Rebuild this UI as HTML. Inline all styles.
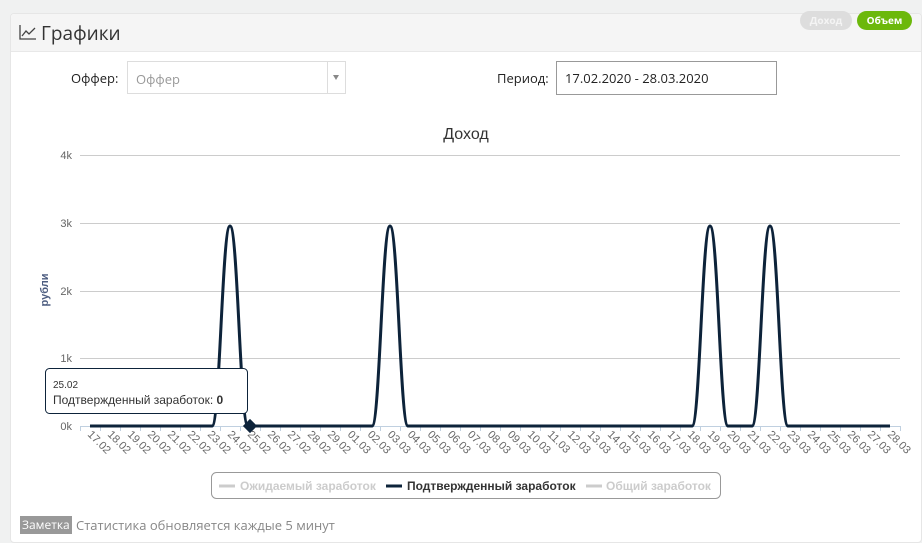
<!DOCTYPE html>
<html><head><meta charset="utf-8"><style>
body{margin:0;width:922px;height:537px;background:#f0f1f1;font-family:"Open Sans","Liberation Sans",sans-serif;overflow:hidden;position:relative}
.panel{position:absolute;left:10px;top:13px;width:912px;height:530px;background:#fff;border-radius:4px;border:1px solid #e6e6e6;box-sizing:border-box}
.head{position:absolute;left:0;top:0;right:0;height:37px;background:#f5f5f5;border-bottom:1px solid #e8e8e8;border-radius:4px 4px 0 0}
.t{position:absolute;font-size:13px;color:#222}
.btn{position:absolute;top:11px;height:19px;border-radius:10px;font-size:10px;font-weight:bold;color:#fff;text-align:center;line-height:19px}
</style></head><body>
<div class="panel"><div class="head"></div></div>
<svg style="position:absolute;left:19px;top:24px" width="18" height="16" viewBox="0 0 18 16"><path d="M1 1V15H17" stroke="#444" stroke-width="1.3" fill="none"/><path d="M3 12L7 7L10 10L16 4" stroke="#444" stroke-width="1.3" fill="none"/></svg>
<div class="t" style="left:41px;top:20px;font-size:19px;color:#333">Графики</div>
<div class="btn" style="left:800px;width:52px;background:#ddd;color:#f4f4f4">Доход</div>
<div class="btn" style="left:857px;width:55px;background:#6cb80b">Объем</div>
<div class="t" style="left:71px;top:69px">Оффер:</div>
<div style="position:absolute;left:127px;top:61px;width:219px;height:33px;border:1px solid #ddd;box-sizing:border-box"></div>
<div style="position:absolute;left:327px;top:61px;width:1px;height:33px;background:#ddd"></div>
<div class="t" style="left:136px;top:70px;color:#999">Оффер</div>
<div style="position:absolute;left:333px;top:75px;width:0;height:0;border-left:3px solid transparent;border-right:3px solid transparent;border-top:5px solid #888"></div>
<div class="t" style="left:497px;top:69px">Период:</div>
<div style="position:absolute;left:556px;top:61px;width:221px;height:34px;border:1px solid #999;box-sizing:border-box"></div>
<div class="t" style="left:565px;top:69px">17.02.2020 - 28.03.2020</div>
<svg style="position:absolute;left:0;top:0" width="922" height="537">
<text x="466" y="139" text-anchor="middle" font-size="16" fill="#333" font-family="Liberation Sans">Доход</text>
<g stroke="#ccc" stroke-width="1">
<line x1="80" x2="900" y1="155.5" y2="155.5"/><line x1="80" x2="900" y1="223.5" y2="223.5"/><line x1="80" x2="900" y1="291.5" y2="291.5"/><line x1="80" x2="900" y1="358.5" y2="358.5"/>
</g>
<line x1="80" x2="900" y1="426.5" y2="426.5" stroke="#c0d0e0"/>
<g font-size="11" fill="#666" text-anchor="end" font-family="Liberation Sans">
<text x="72" y="159">4k</text><text x="72" y="227">3k</text><text x="72" y="295">2k</text><text x="72" y="362">1k</text><text x="72" y="430">0k</text>
</g>
<text transform="translate(48,290) rotate(-90)" text-anchor="middle" font-size="11" font-weight="bold" fill="#4d5d80" font-family="Liberation Sans">рубли</text>
<g id="ticks" stroke="#c0d0e0"></g>
<g id="labs" font-size="11" fill="#666" font-family="Liberation Sans"></g>
<path d="M90 426H212C220 426 222 226 230 226C238 226 240 426 248 426H372C380 426 382 226 390 226C398 226 400 426 408 426H692C700 426 702 226 710 226C718 226 720 426 728 426H752C760 426 762 226 770 226C778 226 780 426 788 426H890" fill="none" stroke="#0d233a" stroke-width="3" stroke-linejoin="round"/>
<rect x="245" y="421" width="10" height="10" transform="rotate(45 250 426)" fill="#0d233a"/>
<rect x="211.5" y="472.5" width="509" height="26" rx="5" fill="#fff" stroke="#999"/>
<g font-size="12" font-weight="bold" font-family="Liberation Sans">
<line x1="219" x2="235" y1="486" y2="486" stroke="#ccc" stroke-width="3"/><text x="240" y="490" fill="#ccc">Ожидаемый заработок</text>
<line x1="386" x2="402" y1="486" y2="486" stroke="#0d233a" stroke-width="3"/><text x="407" y="490" fill="#333">Подтвержденный заработок</text>
<line x1="586" x2="602" y1="486" y2="486" stroke="#ccc" stroke-width="3"/><text x="606" y="490" fill="#ccc">Общий заработок</text>
</g>
<rect x="45.5" y="368.5" width="202" height="45" rx="4" fill="#fff" stroke="#0d233a"/>
<text x="53" y="388" font-size="10" fill="#333" font-family="Liberation Sans">25.02</text>
<text x="53" y="404" font-size="12" fill="#333" font-family="Liberation Sans">Подтвержденный заработок: <tspan font-weight="bold">0</tspan></text>
</svg>
<div style="position:absolute;left:20px;top:516px;background:#999;color:#fff;font-size:12px;padding:1px 2px;line-height:16px">Заметка</div>
<div class="t" style="left:76px;top:516px;color:#888;font-size:13px">Статистика обновляется каждые 5 минут</div>
<script>
var d=[];for(var i=17;i<=29;i++)d.push(i+".02");for(var i=1;i<=28;i++)d.push((i<10?"0":"")+i+".03");
var t=document.getElementById("ticks"),l=document.getElementById("labs"),ns="http://www.w3.org/2000/svg";
for(var i=0;i<=41;i++){var e=document.createElementNS(ns,"line");e.setAttribute("x1",80.5+20*i);e.setAttribute("x2",80.5+20*i);e.setAttribute("y1",426);e.setAttribute("y2",431);t.appendChild(e);}
d.forEach(function(s,i){var x=90+20*i;var e=document.createElementNS(ns,"text");e.setAttribute("transform","translate("+(x-3)+",435) rotate(45)");e.textContent=s;l.appendChild(e);});
</script>
</body></html>
